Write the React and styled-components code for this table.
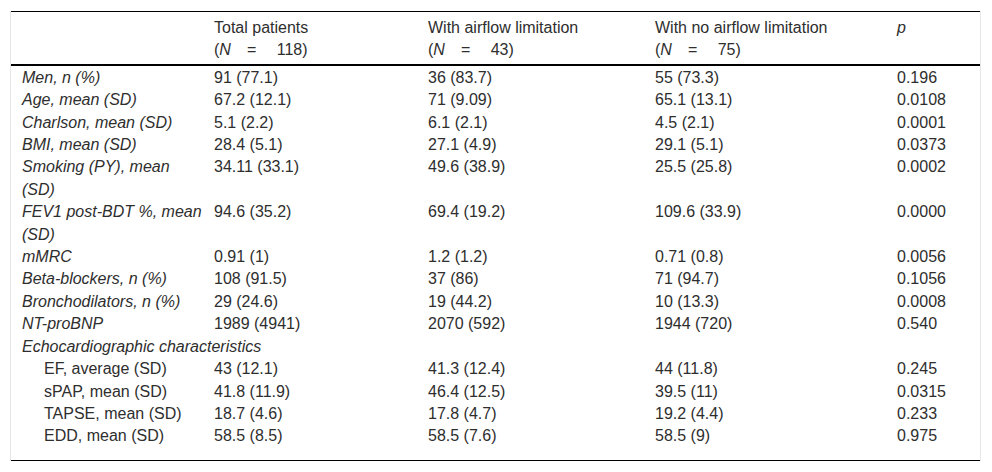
import styled, { createGlobalStyle } from 'styled-components';

const GlobalStyle = createGlobalStyle`
  html, body {
    margin: 0;
    padding: 0;
    background: #ffffff;
  }
  body {
    font-family: "Liberation Sans", Arial, sans-serif;
    color: #2e2e2e;
  }
`;

const Page = styled.div`
  padding: 11px 10px;
`;

const Frame = styled.div`
  width: 969px;
  border-left: 1px solid #e6e6e6;
  border-right: 1px solid #e6e6e6;
`;

const Table = styled.table`
  width: 969px;
  table-layout: fixed;
  border-collapse: collapse;
  font-size: 16px;
  line-height: 22.4px;
  border-top: 1px solid #000;
  border-bottom: 1px solid #000;
`;

const Head = styled.thead`
  border-bottom: 2px solid #000;
`;

const Th = styled.th`
  text-align: left;
  font-weight: normal;
  vertical-align: top;
  padding: 5px 0 2px 11px;
`;

const Td = styled.td`
  vertical-align: top;
  padding: 0 0 0 ${(p) => (p.$indent ? 33 : 11)}px;
  font-style: ${(p) => (p.$italic ? 'italic' : 'normal')};
`;

const Body = styled.tbody`
  tr:first-child td {
    padding-top: 1px;
  }
  tr:last-child td {
    padding-bottom: 12px;
  }
`;

const Eq = styled.span`
  white-space: pre;
`;

const cols = [192, 214, 227, 242, 94];

const rows = [
  ['Men, n (%)', '91 (77.1)', '36 (83.7)', '55 (73.3)', '0.196'],
  ['Age, mean (SD)', '67.2 (12.1)', '71 (9.09)', '65.1 (13.1)', '0.0108'],
  ['Charlson, mean (SD)', '5.1 (2.2)', '6.1 (2.1)', '4.5 (2.1)', '0.0001'],
  ['BMI, mean (SD)', '28.4 (5.1)', '27.1 (4.9)', '29.1 (5.1)', '0.0373'],
  ['Smoking (PY), mean (SD)', '34.11 (33.1)', '49.6 (38.9)', '25.5 (25.8)', '0.0002'],
  ['FEV1 post-BDT %, mean (SD)', '94.6 (35.2)', '69.4 (19.2)', '109.6 (33.9)', '0.0000'],
  ['mMRC', '0.91 (1)', '1.2 (1.2)', '0.71 (0.8)', '0.0056'],
  ['Beta-blockers, n (%)', '108 (91.5)', '37 (86)', '71 (94.7)', '0.1056'],
  ['Bronchodilators, n (%)', '29 (24.6)', '19 (44.2)', '10 (13.3)', '0.0008'],
  ['NT-proBNP', '1989 (4941)', '2070 (592)', '1944 (720)', '0.540'],
];

const echoRows = [
  ['EF, average (SD)', '43 (12.1)', '41.3 (12.4)', '44 (11.8)', '0.245'],
  ['sPAP, mean (SD)', '41.8 (11.9)', '46.4 (12.5)', '39.5 (11)', '0.0315'],
  ['TAPSE, mean (SD)', '18.7 (4.6)', '17.8 (4.7)', '19.2 (4.4)', '0.233'],
  ['EDD, mean (SD)', '58.5 (8.5)', '58.5 (7.6)', '58.5 (9)', '0.975'],
];

const Count = ({ n }) => (
  <>
    (<i>N</i>
    <Eq>{'\u2003=\u2003 '}</Eq>
    {n})
  </>
);

export default function App() {
  return (
    <Page>
      <GlobalStyle />
      <Frame>
        <Table>
          <colgroup>
            {cols.map((w, i) => (
              <col key={i} style={{ width: w }} />
            ))}
          </colgroup>
          <Head>
            <tr>
              <Th />
              <Th>
                Total patients
                <br />
                <Count n={118} />
              </Th>
              <Th>
                With airflow limitation
                <br />
                <Count n={43} />
              </Th>
              <Th>
                With no airflow limitation
                <br />
                <Count n={75} />
              </Th>
              <Th>
                <i>p</i>
              </Th>
            </tr>
          </Head>
          <Body>
            {rows.map(([label, ...vals]) => (
              <tr key={label}>
                <Td $italic>{label}</Td>
                {vals.map((v, i) => (
                  <Td key={i}>{v}</Td>
                ))}
              </tr>
            ))}
            <tr>
              <Td $italic colSpan={5}>
                Echocardiographic characteristics
              </Td>
            </tr>
            {echoRows.map(([label, ...vals]) => (
              <tr key={label}>
                <Td $indent>{label}</Td>
                {vals.map((v, i) => (
                  <Td key={i}>{v}</Td>
                ))}
              </tr>
            ))}
          </Body>
        </Table>
      </Frame>
    </Page>
  );
}
